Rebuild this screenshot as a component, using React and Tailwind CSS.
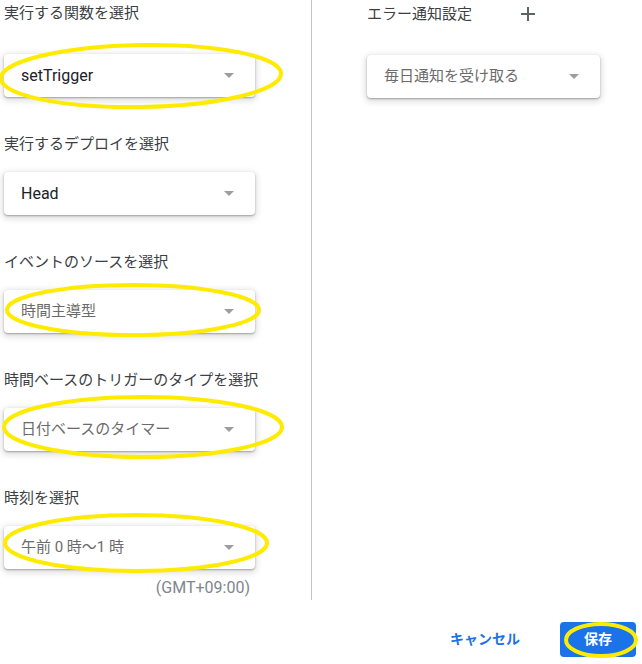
import React from 'react';

const Caret = () => (
  <svg width="10" height="5" viewBox="0 0 10 5" className="shrink-0">
    <path d="M0 0 L10 0 L5 5 Z" fill="#9e9e9e" />
  </svg>
);

function Select({ value, muted, latin, width = 'w-[251px]' }) {
  return (
    <div
      className={`flex h-[43px] ${width} items-center justify-between rounded-[4px] bg-white pl-[17px] pr-[21px] shadow-[0_1px_2px_rgba(0,0,0,0.3),0_2px_6px_2px_rgba(0,0,0,0.12)]`}
    >
      <span
        className={`${latin ? 'text-[16px]' : 'text-[15px]'} ${muted ? 'text-[#6b6b6b]' : 'text-[#202124]'}`}
      >
        {value}
      </span>
      <Caret />
    </div>
  );
}

function Field({ label, first, children }) {
  return (
    <div className={first ? 'mt-[3px]' : 'mt-[37px]'}>
      <div className="h-5 text-[15px] leading-5 text-[#3c4043]">{label}</div>
      <div className={first ? 'mt-[31px]' : 'mt-[18px]'}>{children}</div>
    </div>
  );
}

export default function App() {
  return (
    <div className="relative h-[664px] w-[642px] overflow-hidden bg-white font-[Roboto,'Noto_Sans_CJK_JP',sans-serif]">
      <div className="flex h-[600px]">
        {/* left column */}
        <div className="h-full w-[312px] border-r border-[#c4c4c4] pl-[4px]">
          <Field label="実行する関数を選択" first>
            <Select value="setTrigger" latin />
          </Field>
          <Field label="実行するデプロイを選択">
            <Select value="Head" latin />
          </Field>
          <Field label="イベントのソースを選択">
            <Select value="時間主導型" muted />
          </Field>
          <Field label="時間ベースのトリガーのタイプを選択">
            <Select value="日付ベースのタイマー" muted />
          </Field>
          <Field label="時刻を選択">
            <Select value="午前 0 時〜1 時" muted />
          </Field>
          <div className="mt-[9px] h-5 w-[251px] pr-[5px] text-right text-[16px] leading-5 text-[#80868b]">
            (GMT+09:00)
          </div>
        </div>

        {/* right column */}
        <div className="pl-[55px]">
          <div className="flex h-[28px] items-center">
            <span className="text-[15px] text-[#3c4043]">エラー通知設定</span>
            <svg width="14" height="14" viewBox="0 0 14 14" className="ml-[49px]">
              <path d="M7 0 V14 M0 7 H14" stroke="#5f6368" strokeWidth="2" />
            </svg>
          </div>
          <div className="mt-[27px]">
            <Select value="毎日通知を受け取る" muted width="w-[233px]" />
          </div>
        </div>
      </div>

      {/* footer buttons */}
      <div className="flex items-center justify-end pr-[6px] pt-[22px]">
        <button className="mr-[24px] px-4 text-[14px] font-bold text-[#1a73e8]">キャンセル</button>
        <button className="h-[35px] w-[76px] rounded-[4px] bg-[#1a73e8] text-[14px] font-bold text-white">
          保存
        </button>
      </div>

      {/* yellow annotation marks */}
      <svg
        className="pointer-events-none absolute inset-0"
        width="642"
        height="664"
        viewBox="0 0 642 664"
      >
        <g fill="none" stroke="#ffeb00" strokeWidth="4">
          <ellipse cx="141" cy="76" rx="140" ry="31" transform="rotate(-1 141 76)" />
          <ellipse cx="133" cy="310" rx="126" ry="25" />
          <ellipse cx="143" cy="427" rx="139" ry="30" />
          <ellipse cx="136" cy="543" rx="131" ry="28" />
          <ellipse cx="601" cy="640" rx="35" ry="16" />
        </g>
      </svg>
    </div>
  );
}
